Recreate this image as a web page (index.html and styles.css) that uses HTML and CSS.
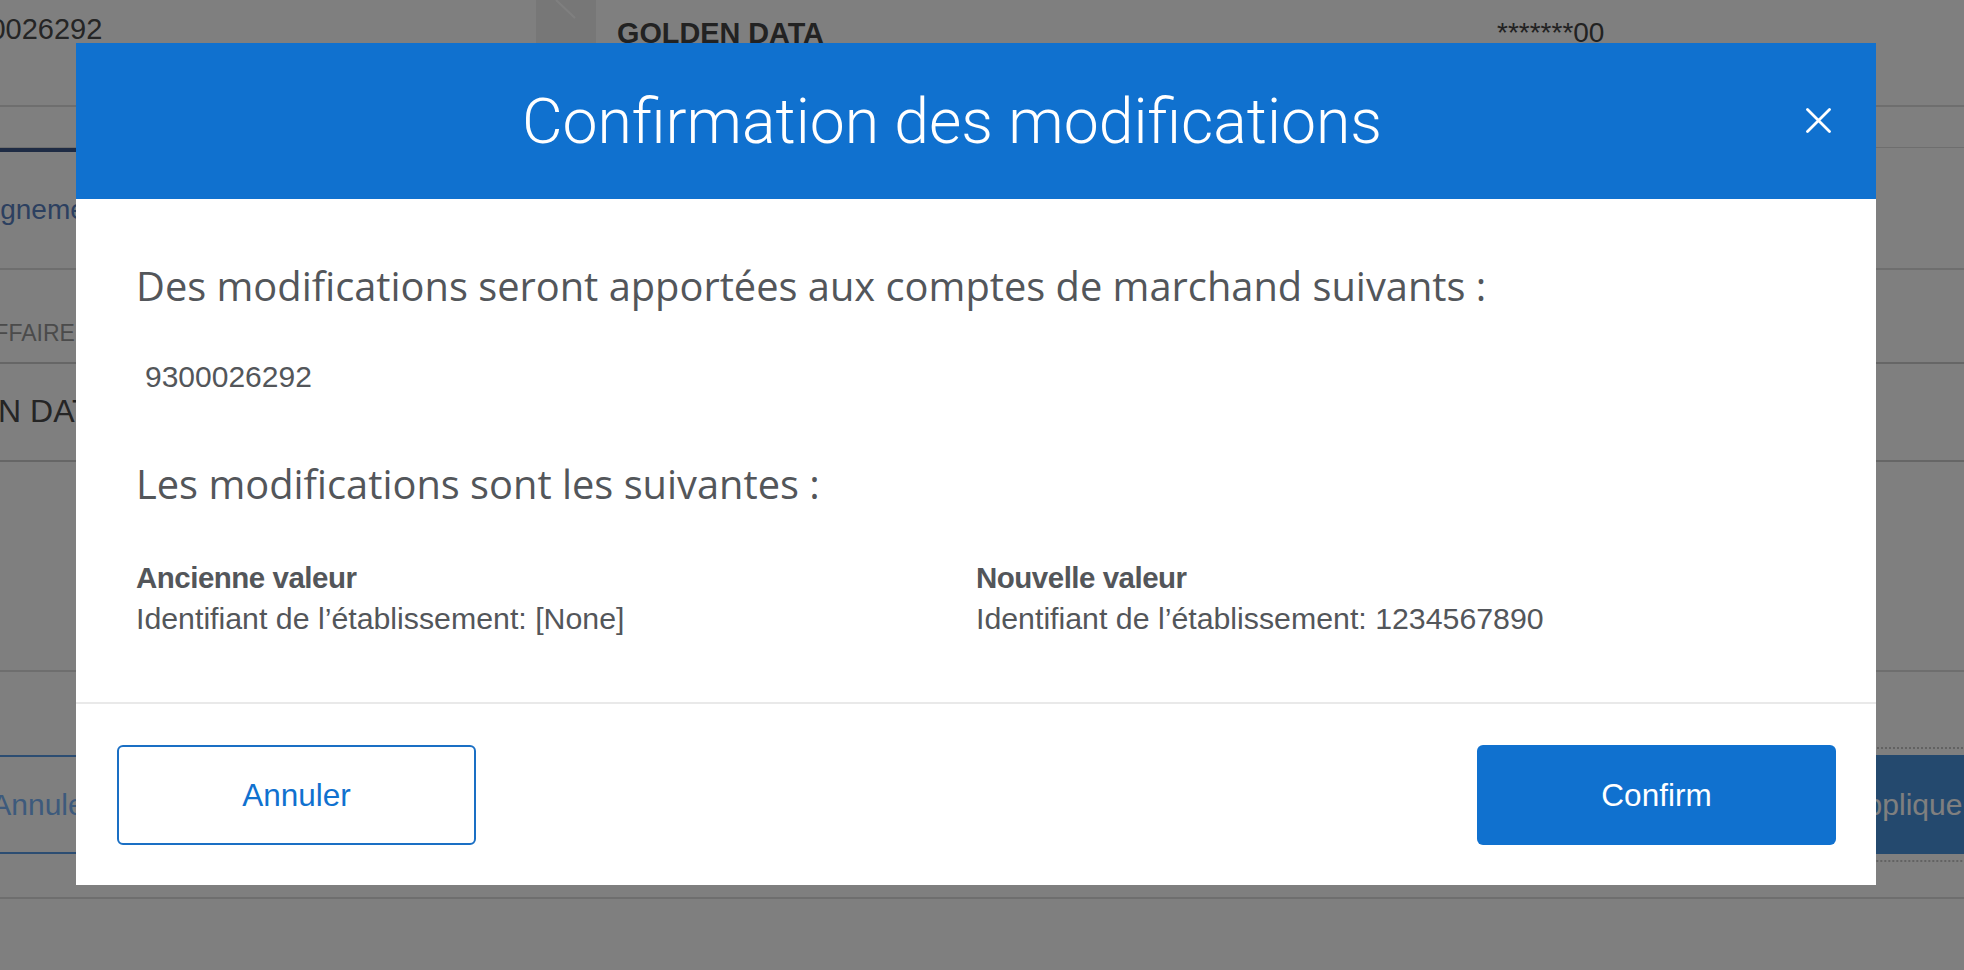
FILE: index.html
```html
<!DOCTYPE html>
<html lang="fr">
<head>
<meta charset="utf-8">
<title>Confirmation des modifications</title>
<link rel="stylesheet" href="styles.css">
</head>
<body>
<div class="page">
  <div class="summary">
    <div class="summary-id">9300026292</div>
    <div class="summary-sep">
      <svg class="sep-mark" width="60" height="105" viewBox="0 0 60 105"><line x1="20" y1="0" x2="39" y2="18" stroke="#ffffff" stroke-width="2"/></svg>
    </div>
    <div class="summary-name">GOLDEN DATA</div>
    <div class="summary-mask">*******00</div>
  </div>
  <nav class="tabs">
    <a class="tab tab-active">Informations</a>
  </nav>
  <section class="panel">
    <h2 class="panel-title">Renseignements sur l’entreprise</h2>
    <div class="field-label">NOM DE L’AFFAIRE</div>
    <div class="field-value">GOLDEN DATA</div>
    <div class="panel-spacer"></div>
    <div class="actions">
      <button class="page-btn page-btn-outline">Annuler</button>
      <button class="page-btn page-btn-solid">Appliquer</button>
    </div>
  </section>
</div>

<div class="backdrop"></div>

<div class="modal" role="dialog">
  <div class="modal-header">
    <h1 class="modal-title">Confirmation des modifications</h1>
    <button class="modal-close" aria-label="Fermer">
      <svg width="25" height="25" viewBox="0 0 25 25"><path d="M1.5 1.5 L23.5 23.5 M23.5 1.5 L1.5 23.5" stroke="#ffffff" stroke-width="2.8" stroke-linecap="round" fill="none"/></svg>
    </button>
  </div>
  <div class="modal-body">
    <p class="modal-lead">Des modifications seront apportées aux comptes de marchand suivants :</p>
    <div class="account-number">9300026292</div>
    <p class="modal-lead modal-lead-second">Les modifications sont les suivantes :</p>
    <div class="changes">
      <div class="change-col">
        <div class="change-label">Ancienne valeur</div>
        <div class="change-value">Identifiant de l’établissement: [None]</div>
      </div>
      <div class="change-col">
        <div class="change-label">Nouvelle valeur</div>
        <div class="change-value">Identifiant de l’établissement: 1234567890</div>
      </div>
    </div>
  </div>
  <div class="modal-footer">
    <button class="modal-btn modal-btn-cancel">Annuler</button>
    <button class="modal-btn modal-btn-confirm">Confirm</button>
  </div>
</div>
</body>
</html>
```

FILE: styles.css
```css
html, body {
  margin: 0;
  padding: 0;
}

body {
  width: 1964px;
  height: 970px;
  overflow: hidden;
  background: #ffffff;
  font-family: "Liberation Sans", Arial, sans-serif;
  color: #4a4a4a;
}

/* ---------- background page ---------- */
.page {
  width: 100%;
}

.summary {
  display: grid;
  grid-template-columns: 536px 60px 901px 1fr;
  height: 105px;
  border-bottom: 2px solid #dcdcdc;
}

.summary-id {
  margin-left: -59px;
  padding-top: 11px;
  font-size: 29px;
  line-height: 36px;
  color: #4a4a4a;
}

.summary-sep {
  background: #eeeeee;
}

.sep-mark {
  display: block;
}

.summary-name {
  padding-left: 21px;
  padding-top: 15px;
  font-size: 28.8px;
  line-height: 36px;
  font-weight: 700;
  color: #444444;
}

.summary-mask {
  padding-top: 15px;
  font-size: 28px;
  line-height: 36px;
  color: #444444;
}

.tabs {
  display: flex;
  height: 45px;
  background: linear-gradient(#dcdcdc, #dcdcdc) no-repeat 0 40px / 100% 1px;
}

.tab {
  box-sizing: border-box;
  width: 260px;
  margin-left: -60px;
  border-bottom: 4px solid transparent;
  font-size: 26px;
  color: transparent;
}

.tab-active {
  border-bottom-color: #3c5688;
}

.panel-title {
  margin: 0;
  margin-left: -87px;
  height: 116px;
  border-bottom: 2px solid #dcdcdc;
  font-size: 28px;
  line-height: 116px;
  font-weight: 400;
  color: #5880c0;
  white-space: nowrap;
}

.field-label {
  box-sizing: border-box;
  display: flex;
  align-items: flex-end;
  height: 94px;
  padding-bottom: 14px;
  margin-left: -136px;
  border-bottom: 2px solid #cccccc;
  font-size: 23px;
  line-height: 29px;
  color: #969696;
  white-space: nowrap;
}

.field-value {
  box-sizing: border-box;
  display: flex;
  align-items: flex-end;
  height: 98px;
  padding-bottom: 31px;
  margin-left: -114px;
  border-bottom: 2px solid #cccccc;
  font-size: 32px;
  line-height: 36px;
  color: #4a4a4a;
  white-space: nowrap;
}

.panel-spacer {
  height: 208px;
  border-bottom: 2px solid #dcdcdc;
}

.actions {
  display: flex;
  justify-content: space-between;
  padding-top: 83px;
  padding-bottom: 43px;
  border-bottom: 2px solid #dcdcdc;
}

.page-btn {
  box-sizing: border-box;
  width: 360px;
  height: 99px;
  border-radius: 4px;
  font-family: "Liberation Sans", Arial, sans-serif;
  font-size: 30px;
}

.page-btn-outline {
  margin-left: -137px;
  background: #ffffff;
  border: 2px solid #589ae4;
  color: #7ab4f8;
}

.page-btn-solid {
  margin-right: -125px;
  background: #4892dc;
  border: 0;
  color: #ffffff;
  outline: 2px dotted #c4c4c4;
  outline-offset: 6px;
}

/* ---------- backdrop ---------- */
.backdrop {
  position: fixed;
  inset: 0;
  background: rgba(0, 0, 0, 0.5);
}

/* ---------- modal ---------- */
.modal {
  position: fixed;
  left: 76px;
  top: 43px;
  width: 1800px;
  background: #ffffff;
}

.modal-header {
  position: relative;
  display: flex;
  align-items: center;
  justify-content: center;
  height: 156px;
  padding-right: 48px;
  background: #1071cf;
}

.modal-title {
  margin: 1px 0 0 0;
  font-family: Roboto, "Liberation Sans", sans-serif;
  font-weight: 300;
  font-size: 62.5px;
  line-height: 62px;
  color: #ffffff;
}

.modal-close {
  position: absolute;
  right: 45px;
  top: 65px;
  width: 25px;
  height: 25px;
  padding: 0;
  border: 0;
  background: transparent;
}

.modal-close svg {
  display: block;
}

.modal-body {
  padding: 63px 60px 64.5px 60px;
}

.modal-lead {
  margin: 0;
  font-family: "Open Sans", "Liberation Sans", sans-serif;
  font-weight: 400;
  font-size: 39.8px;
  line-height: 48px;
  color: #53565a;
}

.modal-lead-second {
  margin-top: 64.5px;
}

.account-number {
  margin-top: 49px;
  padding-left: 9px;
  font-size: 30px;
  line-height: 36px;
  color: #53565a;
}

.changes {
  display: grid;
  grid-template-columns: 1fr 1fr;
  margin-top: 51px;
}

.change-label {
  font-size: 29.5px;
  line-height: 37px;
  font-weight: 700;
  letter-spacing: -0.5px;
  color: #53565a;
}

.change-value {
  margin-top: 3px;
  font-size: 30.3px;
  line-height: 39px;
  color: #53565a;
}

.modal-footer {
  display: flex;
  justify-content: space-between;
  padding: 41px 40px 40px 41px;
  border-top: 2px solid #e9e9e9;
}

.modal-btn {
  box-sizing: border-box;
  width: 359px;
  height: 100px;
  border-radius: 6px;
  font-family: "Liberation Sans", Arial, sans-serif;
  font-size: 31.5px;
  cursor: pointer;
}

.modal-btn-cancel {
  background: #ffffff;
  border: 2px solid #1a6fc4;
  color: #1071cf;
}

.modal-btn-confirm {
  background: #1071cf;
  border: 0;
  color: #ffffff;
}
```
